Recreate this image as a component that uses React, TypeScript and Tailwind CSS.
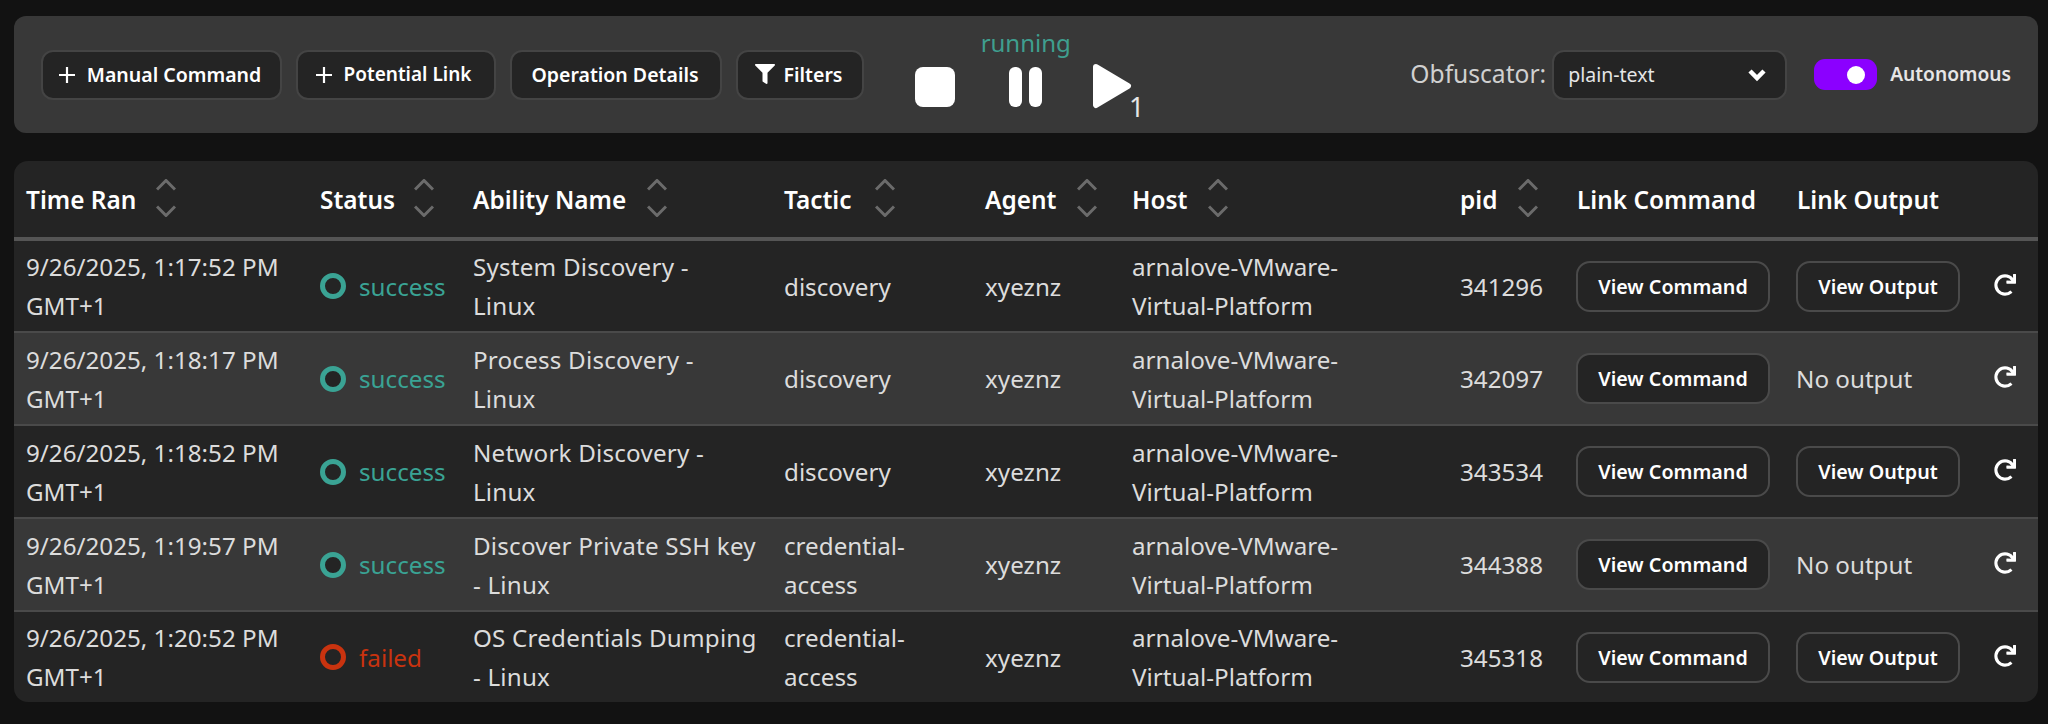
import React from "react";
import { FaFilter, FaRedo } from "react-icons/fa";

const rows = [
  { t: "9/26/2025, 1:17:52 PM", s: "success", a: ["System Discovery -", "Linux"], tac: "discovery", pid: "341296", out: true },
  { t: "9/26/2025, 1:18:17 PM", s: "success", a: ["Process Discovery -", "Linux"], tac: "discovery", pid: "342097", out: false },
  { t: "9/26/2025, 1:18:52 PM", s: "success", a: ["Network Discovery -", "Linux"], tac: "discovery", pid: "343534", out: true },
  { t: "9/26/2025, 1:19:57 PM", s: "success", a: ["Discover Private SSH key", "- Linux"], tac: "credential-access", pid: "344388", out: false },
  { t: "9/26/2025, 1:20:52 PM", s: "failed", a: ["OS Credentials Dumping", "- Linux"], tac: "credential-access", pid: "345318", out: true },
];

const Plus = () => (
  <svg width="16" height="16" viewBox="0 0 16 16" className="shrink-0" aria-hidden="true">
    <path d="M8 0v16M0 8h16" stroke="#fff" strokeWidth="2.2" />
  </svg>
);

const Sort = ({ ml }: { ml: string }) => (
  <svg width="20" height="38" viewBox="0 0 20 38" className={`shrink-0 -mt-[3px] ${ml}`} aria-hidden="true">
    <path d="M1 10.5L10 1.5l9 9M1 27.5l9 9 9-9" fill="none" stroke="#6b6b6b" strokeWidth="3" />
  </svg>
);

const ToolButton = ({ children, cls }: { children: React.ReactNode; cls: string }) => (
  <button className={`h-[50px] flex items-center justify-center rounded-[12px] border-2 border-[#444444] bg-[#242424] font-semibold text-white ${cls}`}>
    {children}
  </button>
);

const Th = ({ label, sort }: { label: string; sort?: string }) => (
  <th className="px-3 text-left align-middle font-semibold text-[24.4px] text-white border-b-4 border-[#555555]">
    <div className="flex items-center whitespace-nowrap">
      {label}
      {sort ? <Sort ml={sort} /> : null}
    </div>
  </th>
);

const ViewButton = ({ label, cls }: { label: string; cls: string }) => (
  <button className={`h-[51px] rounded-[14px] border-2 border-[#4a4a4a] bg-[#242424] text-[19.7px] font-semibold text-white ${cls}`}>
    {label}
  </button>
);

export default function App() {
  return (
    <div className="min-h-screen bg-[#121212] pt-4 pl-[14px] pr-[10px] font-['Noto_Sans',sans-serif] text-[#e6e6e6]">
      <div className="h-[117px] rounded-[12px] bg-[#383838] pl-[27px] pr-[27px] flex items-center">
        <div className="flex items-center gap-[14px]">
          <ToolButton cls="w-[241px] gap-[12px] pr-[3px] text-[19.5px]"><Plus />Manual Command</ToolButton>
          <ToolButton cls="w-[200px] gap-[12px] pr-[5px] text-[19px]"><Plus />Potential Link</ToolButton>
          <ToolButton cls="w-[212px] pr-[2px] text-[19.5px]">Operation Details</ToolButton>
          <ToolButton cls="w-[128px] gap-[9px] pr-[3px] text-[19.5px]"><FaFilter className="text-white text-[20px] -mt-[2px]" />Filters</ToolButton>
        </div>
        <div className="ml-[51px] flex flex-col -mt-[6px]">
          <div className="h-[39px] leading-[30px] text-[24px] text-[#3f9f8f] text-center pr-[8px]">running</div>
          <div className="flex items-start h-[49px]">
            <div className="w-[40px] h-[40px] rounded-[8px] bg-white" />
            <div className="ml-[54px] flex gap-[7px]">
              <div className="w-[13px] h-[40px] rounded-[6px] bg-white" />
              <div className="w-[13px] h-[40px] rounded-[6px] bg-white" />
            </div>
            <svg width="40" height="46" viewBox="0 0 40 46" className="ml-[50px] -mt-[4px]" aria-hidden="true">
              <path d="M4 4L36 23 4 42Z" fill="#fff" stroke="#fff" strokeWidth="6" strokeLinejoin="round" />
            </svg>
            <span className="text-[27px] leading-[27px] mt-[26px] -ml-[3px] text-[#e6e6e6]">1</span>
          </div>
        </div>
        <div className="ml-auto flex items-center">
          <span className="text-[24.6px] text-[#d0d0d0] -ml-[1px]">Obfuscator:</span>
          <div className="ml-[6px] w-[235px] h-[50px] rounded-[12px] border-2 border-[#444444] bg-[#242424] flex items-center justify-between pl-[14px] pr-[18px] text-[19.5px] text-[#e6e6e6]">
            plain-text
            <svg width="20" height="14" viewBox="0 0 20 14" aria-hidden="true">
              <path d="M3 3l7 7 7-7" fill="none" stroke="#fff" strokeWidth="4.5" />
            </svg>
          </div>
          <div className="ml-[27px] w-[63px] h-[31px] rounded-[11px] bg-[#8b00ff] flex items-center justify-end pr-[12px]">
            <div className="w-[18px] h-[18px] rounded-full bg-white" />
          </div>
          <span className="ml-[13px] text-[19.2px] font-semibold text-[#e6e6e6]">Autonomous</span>
        </div>
      </div>

      <div className="mt-[28px] rounded-[14px] bg-[#242424] overflow-hidden">
        <table className="w-full table-fixed border-collapse text-[24.2px] leading-[39px] text-[#dcdcdc]">
          <colgroup>
            <col className="w-[294px]" />
            <col className="w-[153px]" />
            <col className="w-[311px]" />
            <col className="w-[201px]" />
            <col className="w-[147px]" />
            <col className="w-[328px]" />
            <col className="w-[117px]" />
            <col className="w-[220px]" />
            <col className="w-[195px]" />
            <col />
          </colgroup>
          <thead>
            <tr className="h-[78px]">
              <Th label="Time Ran" sort="ml-[20px]" />
              <Th label="Status" sort="ml-[19px]" />
              <Th label="Ability Name" sort="ml-[21px]" />
              <Th label="Tactic" sort="ml-[23px]" />
              <Th label="Agent" sort="ml-[21px]" />
              <Th label="Host" sort="ml-[21px]" />
              <Th label="pid" sort="ml-[21px]" />
              <Th label="Link Command" />
              <Th label="Link Output" />
              <th className="border-b-4 border-[#555555]" />
            </tr>
          </thead>
          <tbody>
            {rows.map((r, i) => {
              const ok = r.s === "success";
              return (
                <tr key={r.pid} className={`${i < 4 ? "h-[93px] border-b-2 border-[#4a4a4a]" : "h-[91px]"} ${i % 2 === 1 ? "bg-[#383838]" : ""}`}>
                  <td className="px-3 align-middle">{r.t} GMT+1</td>
                  <td className="px-3 align-middle">
                    <div className="flex items-center gap-[13px]">
                      <span className={`w-[26px] h-[26px] rounded-full border-[5px] bg-[#242424] shrink-0 ${ok ? "border-[#3aa394]" : "border-[#c9330f]"}`} />
                      <span className={ok ? "text-[#3aa394]" : "text-[#c9330f]"}>{r.s}</span>
                    </div>
                  </td>
                  <td className="px-3 align-middle whitespace-nowrap tracking-[0.2px]">{r.a[0]}<br />{r.a[1]}</td>
                  <td className="px-3 align-middle">{r.tac}</td>
                  <td className="px-3 align-middle">xyeznz</td>
                  <td className="px-3 align-middle whitespace-nowrap">arnalove-VMware-<br />Virtual-Platform</td>
                  <td className="px-3 align-middle">{r.pid}</td>
                  <td className="pl-[11px] pr-0 align-middle">
                    <ViewButton label="View Command" cls="w-[194px]" />
                  </td>
                  <td className="pl-[11px] pr-0 align-middle">
                    {r.out ? <ViewButton label="View Output" cls="w-[164px]" /> : <span>No output</span>}
                  </td>
                  <td className="px-0 align-middle">
                    <FaRedo className="text-white text-[22px] ml-[14px] -mt-[3px]" />
                  </td>
                </tr>
              );
            })}
          </tbody>
        </table>
      </div>
    </div>
  );
}
